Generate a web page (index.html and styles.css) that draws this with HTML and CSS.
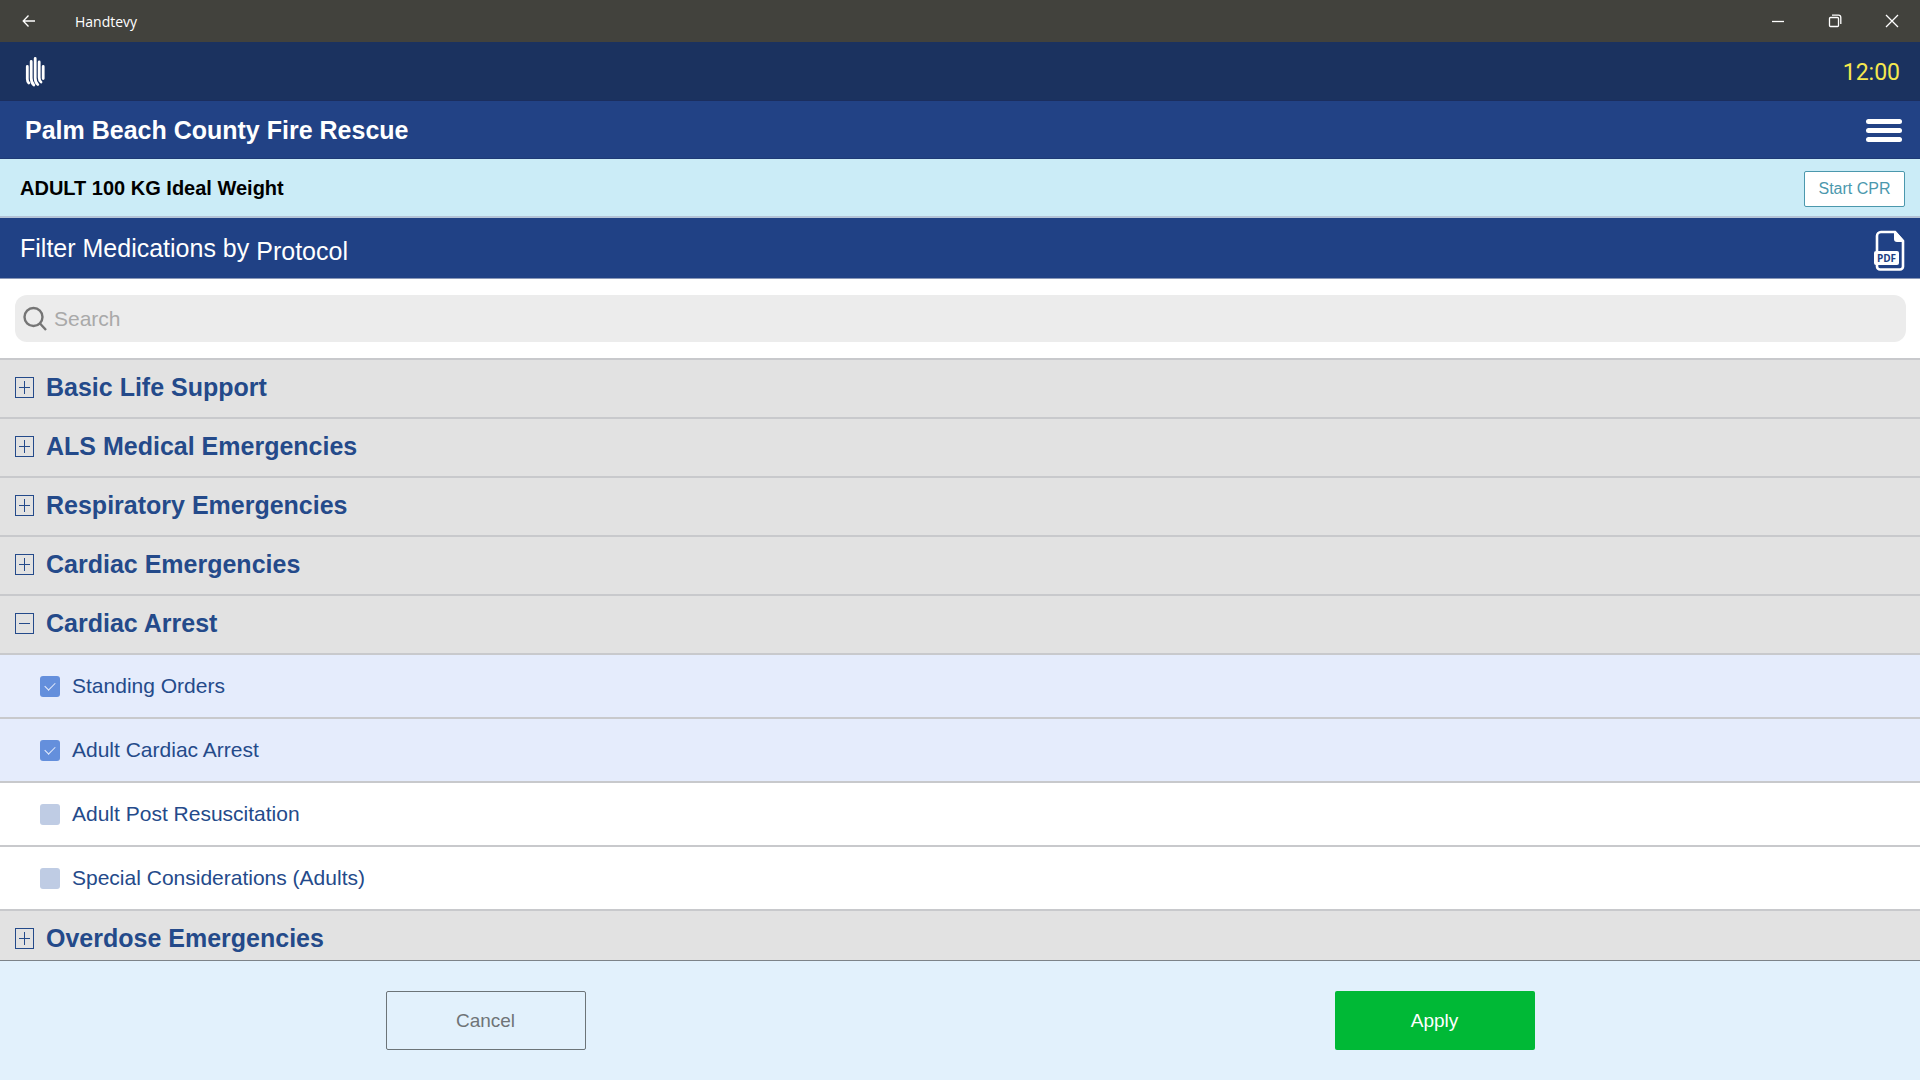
FILE: index.html
```
<!DOCTYPE html>
<html lang="en">
  <head>
    <meta charset="UTF-8">
    <meta name="viewport" content="width=device-width, initial-scale=1.0">
    <title>Handtevy</title>
    <link rel="stylesheet" href="styles.css">
  </head>

  <body>

    <!-- Window title bar -->
    <div class="titlebar">
      <button class="win-btn" aria-label="Back">
        <svg width="14" height="14" viewBox="0 0 14 14"><path d="M13 7H1.5M6.5 1.5L1.2 7l5.3 5.5"/></svg>
      </button>
      <span class="app-name">Handtevy</span>
      <div class="win-controls">
        <button class="win-btn" aria-label="Minimize">
          <svg width="14" height="14" viewBox="0 0 14 14"><path d="M1 7.5h12"/></svg>
        </button>
        <button class="win-btn" aria-label="Restore">
          <svg width="14" height="14" viewBox="0 0 14 14"><rect x="1.5" y="3.5" width="9" height="9" rx="1"/><path d="M4 1.2h6.5a2.3 2.3 0 0 1 2.3 2.3V10"/></svg>
        </button>
        <button class="win-btn" aria-label="Close">
          <svg width="14" height="14" viewBox="0 0 14 14"><path d="M1 1l12 12M13 1L1 13"/></svg>
        </button>
      </div>
    </div>

    <header>
      <div class="topbar">
        <svg class="logo" width="20" height="32" viewBox="0 0 20 32">
          <path d="M2.300 10.500v12.500q0 2.500 1.500 4M6.200 5.500v16.500q0 4.500 2.600 7M10.200 2.500v19.500q0 4.500 2.600 6.500M14.200 6v15.500q0 3 1.800 4.500M18.200 10.500v12"/>
        </svg>
        <time class="timer">12:00</time>
      </div>

      <div class="agency">
        <h1>Palm Beach County Fire Rescue</h1>
        <button class="menu-btn" aria-label="Menu">
          <span></span>
          <span></span>
          <span></span>
        </button>
      </div>

      <div class="patient">
        <strong>ADULT 100 KG Ideal Weight</strong>
        <button class="cpr-btn">Start CPR</button>
      </div>

      <div class="filter-bar">
        <h2>Filter Medications by <span>Protocol</span></h2>
        <button class="pdf-btn" aria-label="PDF">
          <svg width="32" height="42" viewBox="0 0 32 42">
            <path class="page" d="M4 21V6a4 4 0 0 1 4-4H22l8 9v25.500a3 3 0 0 1-3 3H7a3 3 0 0 1-3-3V34"/>
            <path class="solid" d="M21 1h1.500L31 10.500V12h-7a3 3 0 0 1-3-3z"/>
            <rect class="solid" x="1" y="21" width="25" height="14" rx="2"/>
            <text x="13.500" y="32">PDF</text>
          </svg>
        </button>
      </div>
    </header>

    <div class="search">
      <label class="search-box">
        <svg width="24" height="25" viewBox="0 0 24 25"><circle cx="10.500" cy="11" r="9"/><path d="M17 17.500l6 6.500"/></svg>
        <input type="search" placeholder="Search" aria-label="Search">
      </label>
    </div>

    <main class="protocols">
      <button class="group" aria-expanded="false"><span class="toggle"></span>Basic Life Support</button>
      <button class="group" aria-expanded="false"><span class="toggle"></span>ALS Medical Emergencies</button>
      <button class="group" aria-expanded="false"><span class="toggle"></span>Respiratory Emergencies</button>
      <button class="group" aria-expanded="false"><span class="toggle"></span>Cardiac Emergencies</button>
      <button class="group" aria-expanded="true"><span class="toggle"></span>Cardiac Arrest</button>
      <label class="protocol"><input type="checkbox" checked>Standing Orders</label>
      <label class="protocol"><input type="checkbox" checked>Adult Cardiac Arrest</label>
      <label class="protocol"><input type="checkbox">Adult Post Resuscitation</label>
      <label class="protocol"><input type="checkbox">Special Considerations (Adults)</label>
      <button class="group" aria-expanded="false"><span class="toggle"></span>Overdose Emergencies</button>
    </main>

    <footer>
      <button class="action cancel">Cancel</button>
      <button class="action apply">Apply</button>
    </footer>

    <script src="script.js"></script>
  </body>
</html>
```
FILE: styles.css
```
* { box-sizing: border-box; }

body {
	background-color: #fff;
	display: flex;
	flex-direction: column;
	font-family: "Liberation Sans", Arial, sans-serif;
	height: 100vh;
	margin: 0;
}

button {
	background: none;
	border: 0;
	cursor: pointer;
	font-family: inherit;
	padding: 0;
}

h1, h2 { margin: 0; }

svg { display: block; }

/* Title bar */
.titlebar {
	align-items: center;
	background-color: #42423d;
	color: #fff;
	display: flex;
	flex: none;
	height: 42px;
}

.app-name {
	font-family: "Open Sans", sans-serif;
	font-size: 14px;
	line-height: 20px;
	padding: 2px 0 0 18px;
}

.win-controls {
	display: flex;
	margin-left: auto;
}

.win-btn {
	display: grid;
	height: 42px;
	place-items: center;
	width: 57px;
}

.win-btn svg {
	fill: none;
	stroke: #fff;
	stroke-width: 1.3;
}

/* Header bars */
.topbar,
.agency,
.patient,
.filter-bar {
	align-items: center;
	display: flex;
	justify-content: space-between;
}

.topbar {
	background-color: #1b325f;
	border-bottom: 1px solid #1b2e5e;
	height: 59px;
	padding: 2px 20px 0 25px;
}

.logo {
	fill: none;
	stroke: #fff;
	stroke-linecap: round;
	stroke-width: 2.8;
}

.timer {
	color: #f6e84e;
	font-family: Roboto, sans-serif;
	font-size: 23px;
}

.agency {
	background-color: #224285;
	border-bottom: 1px solid #1f3a75;
	color: #fff;
	height: 58px;
	padding: 2px 18px 0 25px;
}

.agency h1 { font-size: 25px; }

.menu-btn {
	display: flex;
	flex-direction: column;
	gap: 4px;
	width: 36px;
}

.menu-btn span {
	background-color: #fff;
	border-radius: 3px;
	height: 5px;
}

.patient {
	background-color: #cbecf7;
	border-bottom: 2px solid #b4c3d6;
	color: #000;
	font-size: 20px;
	height: 59px;
	padding: 2px 15px 0 20px;
}

.cpr-btn {
	background-color: #fff;
	border: 1px solid #4b98ad;
	border-radius: 2px;
	color: #4b98ad;
	font-size: 16px;
	height: 36px;
	width: 101px;
}

.filter-bar {
	background-color: #204185;
	border-bottom: 1px solid #8a98b8;
	color: #fff;
	height: 61px;
	padding: 6px 15px 0 20px;
}

.filter-bar h2 {
	display: flex;
	font-size: 25px;
	font-weight: normal;
	gap: 7px;
	line-height: 28px;
	padding-bottom: 4px;
}

/* The protocol name hangs a little lower than the title */
.filter-bar h2 span { padding-top: 3px; }

.pdf-btn .page {
	fill: none;
	stroke: #fff;
	stroke-width: 2.6;
}

.pdf-btn .solid { fill: #fff; }

.pdf-btn text {
	fill: #204185;
	font-family: "Open Sans", sans-serif;
	font-size: 10px;
	font-weight: bold;
	text-anchor: middle;
}

/* Search */
.search {
	flex: none;
	padding: 16px 14px 16px 15px;
}

.search-box {
	align-items: center;
	background-color: #ececec;
	border-radius: 12px;
	display: flex;
	gap: 7px;
	height: 47px;
	padding: 0 8px;
}

.search-box svg {
	fill: none;
	flex: none;
	stroke: #757575;
	stroke-width: 2.4;
}

.search-box input {
	appearance: none;
	background: none;
	border: 0;
	flex: 1;
	font-family: inherit;
	font-size: 21px;
	outline: none;
	padding: 0;
}

.search-box input::placeholder { color: #a9a9a9; }

/* Protocol list */
.protocols {
	display: flex;
	flex: 1;
	flex-direction: column;
	min-height: 0;
	overflow-y: auto;
	scrollbar-width: none;
}

.group,
.protocol {
	align-items: center;
	border-top: 2px solid #c8c9cc;
	color: #244a8a;
	display: flex;
	flex: none;
}

.group {
	background-color: #e2e2e2;
	font-size: 25px;
	font-weight: bold;
	gap: 12px;
	height: 59px;
	padding: 0 15px 2px;
}

.toggle {
	border: 1px solid #244a8a;
	display: grid;
	height: 21px;
	place-items: center;
	width: 19px;
}

.toggle::before,
.toggle::after {
	background-color: #244a8a;
	content: "";
	grid-area: 1 / 1;
	height: 1px;
	width: 11px;
}

.toggle::after {
	height: 13px;
	width: 1px;
}

.group[aria-expanded="true"] .toggle::after { display: none; }

.protocol {
	background-color: #fff;
	cursor: pointer;
	font-size: 21px;
	gap: 12px;
	height: 64px;
	padding: 0 40px;
}

.protocol:has(:checked) { background-color: #e5ecfc; }

.protocol input {
	appearance: none;
	background-color: #bfcce4;
	border-radius: 3px;
	display: grid;
	height: 21px;
	margin: 0;
	place-items: center;
	width: 20px;
}

.protocol input:checked { background-color: #648fdc; }

.protocol input:checked::before {
	border: solid #e5ecfc;
	border-width: 0 0 1px 1px;
	content: "";
	height: 5px;
	margin-bottom: 3px;
	transform: rotate(-45deg);
	width: 9px;
}

/* Footer actions */
footer {
	align-items: center;
	background-color: #e2f1fc;
	border-top: 1px solid #7d8388;
	display: grid;
	flex: none;
	grid-template-columns: 1fr 1fr;
	height: 120px;
	justify-items: center;
	padding: 0 11px;
}

.action {
	border-radius: 2px;
	font-size: 19px;
	height: 59px;
	width: 200px;
}

.cancel {
	border: 1px solid #6c7478;
	color: #6f7477;
}

.apply {
	background-color: #00b936;
	color: #fff;
}
```
FILE: script.js
```
/* Show or hide the protocols that follow a group heading */
document.querySelectorAll(".group").forEach(function(group){
	group.addEventListener("click", function(){
		const open = group.getAttribute("aria-expanded") == "true";
		group.setAttribute("aria-expanded", !open);

		let row = group.nextElementSibling;
		while( row && row.classList.contains("protocol") ){
			row.style.display = open ? "none" : "";
			row = row.nextElementSibling;
		}
	});
});
```
